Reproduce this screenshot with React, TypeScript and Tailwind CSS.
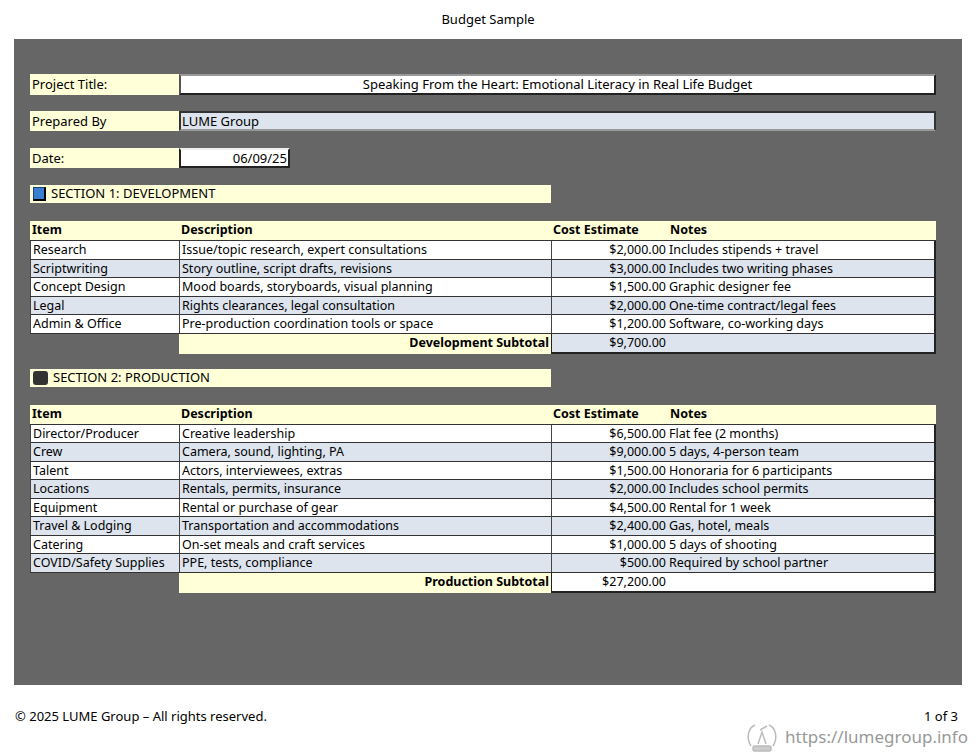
const dev = [
  ["Research", "Issue/topic research, expert consultations", "$2,000.00", "Includes stipends + travel"],
  ["Scriptwriting", "Story outline, script drafts, revisions", "$3,000.00", "Includes two writing phases"],
  ["Concept Design", "Mood boards, storyboards, visual planning", "$1,500.00", "Graphic designer fee"],
  ["Legal", "Rights clearances, legal consultation", "$2,000.00", "One-time contract/legal fees"],
  ["Admin & Office", "Pre-production coordination tools or space", "$1,200.00", "Software, co-working days"],
];
const prod = [
  ["Director/Producer", "Creative leadership", "$6,500.00", "Flat fee (2 months)"],
  ["Crew", "Camera, sound, lighting, PA", "$9,000.00", "5 days, 4-person team"],
  ["Talent", "Actors, interviewees, extras", "$1,500.00", "Honoraria for 6 participants"],
  ["Locations", "Rentals, permits, insurance", "$2,000.00", "Includes school permits"],
  ["Equipment", "Rental or purchase of gear", "$4,500.00", "Rental for 1 week"],
  ["Travel & Lodging", "Transportation and accommodations", "$2,400.00", "Gas, hotel, meals"],
  ["Catering", "On-set meals and craft services", "$1,000.00", "5 days of shooting"],
  ["COVID/Safety Supplies", "PPE, tests, compliance", "$500.00", "Required by school partner"],
];
const cols = "grid w-[906px] grid-cols-[149px_372px_116px_269px]";

function Table({ rows, subtotalLabel, subtotal }: { rows: string[][]; subtotalLabel: string; subtotal: string }) {
  const subBg = rows.length === 5 ? "bg-[#dde4ee]" : "bg-white";
  return (
    <div className="font-['Liberation_Serif'] text-[12.5px] leading-[18px] text-black">
      <div className={`${cols} h-[19px] bg-[#ffffd8] font-bold`}>
        <div className="pl-[2px]">Item</div>
        <div className="pl-[2px]">Description</div>
        <div className="pl-[2px]">Cost Estimate</div>
        <div className="pl-[3px]">Notes</div>
      </div>
      {rows.map((r, i) => (
        <div key={r[0]} className={`${cols} h-[18.5px] border-t border-[#333] ${i % 2 ? "bg-[#dde4ee]" : "bg-white"}`}>
          <div className="pl-[2px] border-l border-[#444] whitespace-nowrap">{r[0]}</div>
          <div className="pl-[2px] border-l border-[#444] whitespace-nowrap">{r[1]}</div>
          <div className="pr-[1px] text-right border-l border-[#444]">{r[2]}</div>
          <div className="pl-[2px] border-r-2 border-[#222] whitespace-nowrap">{r[3]}</div>
        </div>
      ))}
      <div className={`${cols} h-[19px] border-t border-[#333]`}>
        <div className="bg-[#666666]" />
        <div className="bg-[#ffffd8] text-right pr-[2px] font-bold">{subtotalLabel}</div>
        <div className={`text-right pr-[1px] border-l border-b-2 border-[#222] ${subBg}`}>{subtotal}</div>
        <div className={`border-r-2 border-b-2 border-[#222] ${subBg}`} />
      </div>
    </div>
  );
}

function SectionHead({ icon, text }: { icon: React.ReactNode; text: string }) {
  return (
    <div className="w-[521px] h-[18px] bg-[#ffffd8] flex items-center gap-[5px] pl-[3px] font-['Liberation_Sans'] text-[13px] text-black">
      {icon}
      <span>{text}</span>
    </div>
  );
}

export default function App() {
  return (
    <div className="w-[976px] h-[756px] bg-white relative font-['Liberation_Sans']">
      <div className="h-[39px] flex items-center justify-center text-[13px] text-black">Budget Sample</div>
      <div className="mx-[14px] h-[646px] bg-[#666666] pl-[16px] pt-[35px] flex flex-col">
        <div className="flex h-[21px] text-[13px]">
          <div className="w-[149px] bg-[#ffffd8] pl-[2px] leading-[21px]">Project Title:</div>
          <div className="w-[757px] bg-white border-2 border-[#222] border-t-[#999] border-l-[#555] text-center leading-[17px]">Speaking From the Heart: Emotional Literacy in Real Life Budget</div>
        </div>
        <div className="flex h-[20px] text-[13px] mt-[16px]">
          <div className="w-[149px] bg-[#ffffd8] pl-[2px] leading-[20px]">Prepared By</div>
          <div className="w-[757px] bg-[#dde4ee] border-2 border-[#333] border-b-[#999] pl-[1px] leading-[16px]">LUME Group</div>
        </div>
        <div className="flex h-[20px] text-[13px] mt-[17px]">
          <div className="w-[149px] bg-[#ffffd8] pl-[2px] leading-[20px]">Date:</div>
          <div className="w-[111px] bg-white border-2 border-[#222] border-t-[#eee] text-right pr-[1px] leading-[16px]">06/09/25</div>
        </div>
        <div className="mt-[17px]">
          <SectionHead text="SECTION 1: DEVELOPMENT" icon={<span className="w-[13px] h-[14px] bg-[#3a7fd0] border border-[#1a3f70] border-r-2 border-b-2 border-r-black border-b-black inline-block" />} />
        </div>
        <div className="mt-[18px]">
          <Table rows={dev} subtotalLabel="Development Subtotal" subtotal="$9,700.00" />
        </div>
        <div className="mt-[17px]">
          <SectionHead text="SECTION 2: PRODUCTION" icon={<span className="w-[15px] h-[14px] bg-[#333] rounded-[3px] inline-block" />} />
        </div>
        <div className="mt-[18px]">
          <Table rows={prod} subtotalLabel="Production Subtotal" subtotal="$27,200.00" />
        </div>
      </div>
      <div className="flex justify-between px-[15px] mt-[22px] text-[13px] text-black">
        <span>© 2025 LUME Group – All rights reserved.</span>
        <span className="pr-[3px]">1 of 3</span>
      </div>
      <div className="absolute right-[8px] bottom-[4px] flex items-center gap-[6px] text-[17px] text-[#999]">
        <svg width="34" height="30" viewBox="0 0 34 30" fill="none" stroke="#bbb" strokeWidth="1.5">
          <path d="M6 24 C1 16 3 6 10 3" /><path d="M28 24 C33 16 31 6 24 3" />
          <path d="M13 22 L17 10 L21 22" /><path d="M15 8 L22 4" />
          <rect x="8" y="24" width="18" height="5" rx="2" fill="#ccc" />
        </svg>
        <span>https://lumegroup.info</span>
      </div>
    </div>
  );
}
